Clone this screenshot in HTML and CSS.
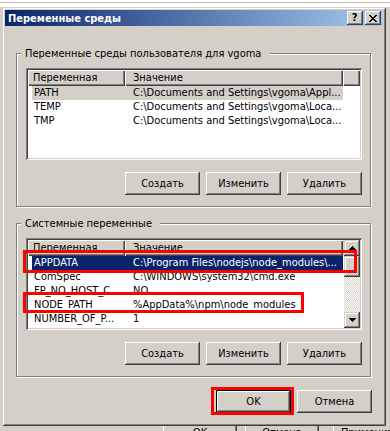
FILE: index.html
```html
<!DOCTYPE html>
<html lang="ru">
<head>
    <meta charset="UTF-8">
    <meta name="viewport" content="width=device-width, initial-scale=1.0">
    <title>Переменные среды</title>
    <link rel="stylesheet" href="styles.css">
</head>
<body>
    <div class="screen">
        <div class="desk-top"></div>
        <div class="window">
            <div class="titlebar">
                <span class="title">Переменные среды</span>
                <div class="caption-buttons">
                    <span class="cap-btn help">?</span>
                    <span class="cap-btn close">
                        <svg width="8" height="7" viewBox="0 0 8 7" shape-rendering="crispEdges">
                            <path d="M0 0h2v1h-2zM6 0h2v1h-2zM1 1h2v1h-2zM5 1h2v1h-2zM2 2h4v1h-4zM3 3h2v1h-2zM2 4h4v1h-4zM1 5h2v1h-2zM5 5h2v1h-2zM0 6h2v1h-2zM6 6h2v1h-2z" fill="#000"/>
                        </svg>
                    </span>
                </div>
            </div>
            <div class="client">
                <div class="group">
                    <span class="legend legend-user">Переменные среды пользователя для vgoma</span>
                    <div class="listview">
                        <div class="lv-main">
                            <div class="lv-header">
                                <div class="hcell name">Переменная</div>
                                <div class="hcell value">Значение</div>
                                <div class="hcell fill"></div>
                            </div>
                            <div class="lv-rows">
                                <div class="lv-row inactive-sel"><span class="c1">PATH</span><span class="c2">C:\Documents and Settings\vgoma\Appl...</span></div>
                                <div class="lv-row"><span class="c1">TEMP</span><span class="c2">C:\Documents and Settings\vgoma\Loca...</span></div>
                                <div class="lv-row"><span class="c1">TMP</span><span class="c2">C:\Documents and Settings\vgoma\Loca...</span></div>
                            </div>
                        </div>
                    </div>
                    <div class="actions">
                        <button class="btn">Создать</button>
                        <button class="btn">Изменить</button>
                        <button class="btn">Удалить</button>
                    </div>
                </div>

                <div class="group group-system">
                    <span class="legend legend-system">Системные переменные</span>
                    <div class="listview">
                        <div class="lv-main">
                            <div class="lv-header">
                                <div class="hcell name">Переменная</div>
                                <div class="hcell value">Значение</div>
                            </div>
                            <div class="lv-rows">
                                <div class="lv-row sel"><span class="c1">APPDATA</span><span class="c2">C:\Program Files\nodejs\node_modules\...</span></div>
                                <div class="lv-row"><span class="c1">ComSpec</span><span class="c2">C:\WINDOWS\system32\cmd.exe</span></div>
                                <div class="lv-row"><span class="c1">FP_NO_HOST_C</span><span class="c2">NO</span></div>
                                <div class="lv-row"><span class="c1">NODE_PATH</span><span class="c2">%AppData%\npm\node_modules</span></div>
                                <div class="lv-row"><span class="c1">NUMBER_OF_P...</span><span class="c2">1</span></div>
                            </div>
                        </div>
                        <div class="scrollbar">
                            <div class="sb-btn">
                                <svg width="7" height="4" viewBox="0 0 7 4" shape-rendering="crispEdges"><path d="M3 0h1v1h1v1h1v1h1v1h-7v-1h1v-1h1v-1h1z" fill="#000"/></svg>
                            </div>
                            <div class="sb-thumb"></div>
                            <div class="sb-track"></div>
                            <div class="sb-btn">
                                <svg width="7" height="4" viewBox="0 0 7 4" shape-rendering="crispEdges"><path d="M0 0h7v1h-1v1h-1v1h-1v1h-1v-1h-1v-1h-1v-1h-1z" fill="#000"/></svg>
                            </div>
                        </div>
                    </div>
                    <div class="actions">
                        <button class="btn">Создать</button>
                        <button class="btn">Изменить</button>
                        <button class="btn">Удалить</button>
                    </div>
                </div>

                <div class="dialog-actions">
                    <button class="btn default">OK</button>
                    <button class="btn">Отмена</button>
                </div>
            </div>
        </div>
        <div class="behind">
            <span class="btn behind-ok">OK</span>
            <span class="btn behind-cancel">Отмена</span>
            <span class="btn behind-apply">Применить</span>
        </div>

        <!-- red marks drawn over the screenshot -->
        <div class="mark mark-appdata"></div>
        <div class="mark mark-node"></div>
        <div class="mark mark-ok"></div>
    </div>
</body>
</html>
```

FILE: styles.css
```css
body {
    margin: 0;
    font-family: "DejaVu Sans", sans-serif;
    font-stretch: condensed;
    font-size: 11px;
    color: #000;
}
.screen {
    position: relative;
    width: 390px;
    height: 431px;
    overflow: hidden;
    background: #d4d0c8;
    display: flex;
    flex-direction: column;
}
.desk-top {
    height: 7px;
    flex-shrink: 0;
    background: linear-gradient(#fff 0 2px, #c8c4bc 2px 3px, #fff 3px);
}
.window {
    width: 384px;
    height: 419px;
    flex-shrink: 0;
    margin-left: 2px;
    box-sizing: border-box;
    padding: 3px;
    background: #d4d0c8;
    box-shadow: inset 1px 1px #d4d0c8, inset -1px -1px #404040, inset 2px 2px #fff, inset -2px -2px #808080;
    display: flex;
    flex-direction: column;
}
.titlebar {
    height: 16px;
    background: linear-gradient(to right, #0a246a, #a6caf0);
    display: flex;
    align-items: center;
    justify-content: space-between;
    padding: 0 2px 0 3px;
}
.title {
    color: #fff;
    font-weight: bold;
}
.caption-buttons {
    display: flex;
    gap: 2px;
}
.cap-btn {
    width: 16px;
    height: 14px;
    box-sizing: border-box;
    background: #d4d0c8;
    box-shadow: inset -1px -1px #404040, inset 1px 1px #fff, inset -2px -2px #808080;
    display: flex;
    align-items: center;
    justify-content: center;
}
.cap-btn.help {
    font-weight: bold;
    font-size: 11px;
    line-height: 14px;
    padding-right: 1px;
}
.client {
    flex: 1;
    padding: 27px 12px 0 11px;
    display: flex;
    flex-direction: column;
}
.group {
    border: 1px solid #808080;
    box-shadow: 1px 1px 0 #fff, inset 1px 1px 0 #fff;
    padding: 0 8px 11px 9px;
    display: flex;
    flex-direction: column;
}
.group-system {
    margin-top: 16px;
}
.legend {
    align-self: flex-start;
    height: 13px;
    line-height: 13px;
    margin: -7px 0 0 -5px;
    padding: 0 9px 0 4px;
    background: #d4d0c8;
}
.legend-system {
    padding-right: 8px;
}
.listview {
    margin-top: 8px;
    height: 92px;
    box-sizing: border-box;
    padding: 2px;
    background: #fff;
    box-shadow: inset 1px 1px #808080, inset -1px -1px #fff, inset 2px 2px #404040, inset -2px -2px #d4d0c8;
    display: flex;
}
.lv-main {
    flex: 1;
    display: flex;
    flex-direction: column;
    overflow: hidden;
}
.lv-header {
    display: flex;
    height: 16px;
    flex-shrink: 0;
    background: #d4d0c8;
}
.hcell {
    box-sizing: border-box;
    line-height: 15px;
    padding-left: 5px;
    white-space: nowrap;
    box-shadow: inset 1px 1px #fff, inset -1px -1px #404040, inset -2px -2px #808080;
}
.hcell.name {
    width: 97px;
}
.hcell.value {
    width: 218px;
    padding-left: 8px;
}
.hcell.fill {
    flex: 1;
}
.lv-row {
    display: flex;
    width: 311px;
    height: 14px;
    line-height: 14px;
    margin-left: 4px;
    white-space: nowrap;
}
.lv-row .c1 {
    width: 93px;
    flex-shrink: 0;
    box-sizing: border-box;
    padding-left: 2px;
    overflow: hidden;
}
.lv-row .c2 {
    flex: 1;
    padding-left: 8px;
    overflow: hidden;
}
.lv-row.inactive-sel {
    background: #d4d0c8;
}
.lv-row.sel {
    background: #0a246a;
    color: #fff;
}
.scrollbar {
    width: 16px;
    display: flex;
    flex-direction: column;
    background-color: #fff;
    background-image: repeating-conic-gradient(#d4d0c8 0 25%, #fff 0 50%);
    background-size: 2px 2px;
}
.sb-btn, .sb-thumb {
    background: #d4d0c8;
    box-shadow: inset -1px -1px #404040, inset 1px 1px #d4d0c8, inset -2px -2px #808080, inset 2px 2px #fff;
}
.sb-btn {
    height: 16px;
    display: flex;
    align-items: center;
    justify-content: center;
}
.sb-thumb {
    height: 21px;
}
.sb-track {
    flex: 1;
}
.actions {
    display: flex;
    justify-content: flex-end;
    gap: 6px;
    margin-top: 12px;
}
.btn {
    width: 75px;
    height: 23px;
    box-sizing: border-box;
    padding: 0;
    border: none;
    font: inherit;
    color: #000;
    background: #d4d0c8;
    box-shadow: inset -1px -1px #404040, inset 1px 1px #fff, inset -2px -2px #808080, inset 2px 2px #d4d0c8;
}
.btn.default {
    box-shadow: inset 0 0 0 1px #000, inset -2px -2px #404040, inset 2px 2px #fff, inset -3px -3px #808080;
}
.dialog-actions {
    display: flex;
    justify-content: flex-end;
    gap: 6px;
    margin-top: 13px;
    margin-right: -1px;
}
.behind {
    height: 5px;
    flex-shrink: 0;
    overflow: hidden;
    display: flex;
}
.behind .btn {
    width: 74px;
    flex-shrink: 0;
    margin-top: -5px;
    display: flex;
    align-items: center;
    justify-content: center;
}
.behind-ok {
    margin-left: 163px;
}
.behind-cancel {
    margin-left: 8px;
}
.behind-apply {
    margin-left: 14px;
}
.mark {
    position: absolute;
    box-sizing: border-box;
    border: 3px solid #f00;
}
.mark-appdata {
    left: 23px;
    top: 250px;
    width: 334px;
    height: 23px;
}
.mark-node {
    left: 23px;
    top: 292px;
    width: 281px;
    height: 21px;
}
.mark-ok {
    left: 211px;
    top: 387px;
    width: 83px;
    height: 28px;
}
```
